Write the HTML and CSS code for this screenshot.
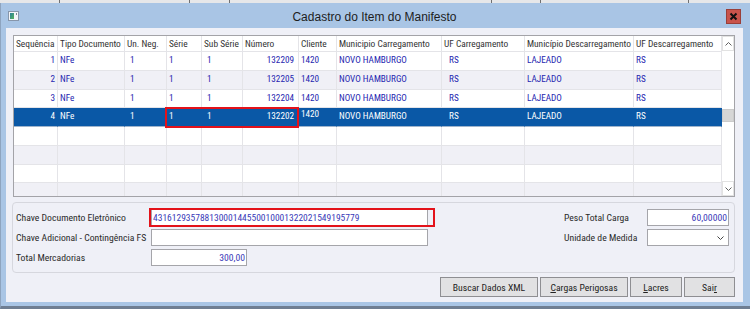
FILE: index.html
```html
<!DOCTYPE html>
<html lang="pt-BR">
<head>
      <meta charset="UTF-8">
      <meta name="viewport" content="width=device-width, initial-scale=1.0">
      <title>Cadastro do Item do Manifesto</title>
      <link rel="stylesheet" href="styles.css">
</head>
<body>

      <div class="backdrop">
            <span style="width:60px"></span>
            <span style="width:130px"></span>
            <span style="width:40px"></span>
            <span style="width:262px"></span>
            <span style="width:49px"></span>
            <span style="width:148px"></span>
      </div>

      <div class="window">
            <div class="titlebar">
                  <svg class="app-icon" width="11" height="10" viewBox="0 0 11 10">
                        <defs>
                              <linearGradient id="ic" x1="0" y1="0" x2="1" y2="1">
                                    <stop offset="0" stop-color="#2a7f9c"/>
                                    <stop offset="1" stop-color="#58b35a"/>
                              </linearGradient>
                        </defs>
                        <rect x="0.5" y="0.5" width="10" height="9" fill="#f3f5f8" stroke="#8796ab"/>
                        <rect x="2" y="2" width="4" height="6" fill="url(#ic)"/>
                        <rect x="8" y="2" width="1" height="2" fill="#7a8797"/>
                  </svg>
                  <div class="title">Cadastro do Item do Manifesto</div>
                  <div class="close">
                        <svg width="9" height="9" viewBox="0 0 9 9">
                              <path d="M1.5 1.5 L7.5 7.5 M7.5 1.5 L1.5 7.5" stroke="#111" stroke-width="2"/>
                        </svg>
                  </div>
            </div>

            <div class="client">
                  <div class="grid">
                        <table class="items">
                              <thead>
                                    <tr>
                                          <th class="w-seq">Sequência</th>
                                          <th class="w-tipo">Tipo Documento</th>
                                          <th class="w-un">Un. Neg.</th>
                                          <th class="w-serie">Série</th>
                                          <th class="w-sub">Sub Série</th>
                                          <th class="w-num">Número</th>
                                          <th class="w-cli">Cliente</th>
                                          <th class="w-mc">Municipio Carregamento</th>
                                          <th class="w-ufc">UF Carregamento</th>
                                          <th class="w-md">Município Descarregamento</th>
                                          <th class="w-ufd">UF Descarregamento</th>
                                    </tr>
                              </thead>
                              <tbody>
                                    <tr>
                                          <td class="num">1</td><td>NFe</td><td class="ind">1</td><td>1</td><td class="ind">1</td>
                                          <td class="num wide">132209</td><td>1420</td><td>NOVO HAMBURGO</td><td class="ind2">RS</td><td>LAJEADO</td><td>RS</td>
                                    </tr>
                                    <tr class="alt">
                                          <td class="num">2</td><td>NFe</td><td class="ind">1</td><td>1</td><td class="ind">1</td>
                                          <td class="num wide">132205</td><td>1420</td><td>NOVO HAMBURGO</td><td class="ind2">RS</td><td>LAJEADO</td><td>RS</td>
                                    </tr>
                                    <tr>
                                          <td class="num">3</td><td>NFe</td><td class="ind">1</td><td>1</td><td class="ind">1</td>
                                          <td class="num wide">132204</td><td>1420</td><td>NOVO HAMBURGO</td><td class="ind2">RS</td><td>LAJEADO</td><td>RS</td>
                                    </tr>
                                    <tr class="sel">
                                          <td class="num">4</td><td>NFe</td><td class="ind">1</td><td>1</td><td class="ind">1</td>
                                          <td class="num wide">132202</td><td class="raised">1420</td><td>NOVO HAMBURGO</td><td class="ind2">RS</td><td>LAJEADO</td><td>RS</td>
                                    </tr>
                                    <tr><td></td><td></td><td></td><td></td><td></td><td></td><td></td><td></td><td></td><td></td><td></td></tr>
                                    <tr class="alt"><td></td><td></td><td></td><td></td><td></td><td></td><td></td><td></td><td></td><td></td><td></td></tr>
                                    <tr><td></td><td></td><td></td><td></td><td></td><td></td><td></td><td></td><td></td><td></td><td></td></tr>
                                    <tr class="alt"><td></td><td></td><td></td><td></td><td></td><td></td><td></td><td></td><td></td><td></td><td></td></tr>
                              </tbody>
                        </table>
                        <div class="vscroll">
                              <div class="arrow">
                                    <svg width="7" height="4" viewBox="0 0 7 4"><path d="M0.5 3.5 L3.5 0.5 L6.5 3.5" fill="none" stroke="#606060"/></svg>
                              </div>
                              <div class="track"><div class="thumb"></div></div>
                              <div class="arrow">
                                    <svg width="7" height="4" viewBox="0 0 7 4"><path d="M0.5 0.5 L3.5 3.5 L6.5 0.5" fill="none" stroke="#606060"/></svg>
                              </div>
                        </div>
                        <div class="mark"></div>
                  </div>

                  <div class="group">
                        <div class="field-col">
                              <div class="field">
                                    <label>Chave Documento Eletrônico</label>
                                    <div class="input key">43161293578813000144550010001322021549195779</div>
                              </div>
                              <div class="field">
                                    <label>Chave Adicional - Contingência FS</label>
                                    <div class="input long"></div>
                              </div>
                              <div class="field">
                                    <label>Total Mercadorias</label>
                                    <div class="input short right">300,00</div>
                              </div>
                        </div>
                        <div class="field-col">
                              <div class="field">
                                    <label class="label-r">Peso Total Carga</label>
                                    <div class="input small right">60,00000</div>
                              </div>
                              <div class="field">
                                    <label class="label-r">Unidade de Medida</label>
                                    <div class="input small select">
                                          <svg width="7" height="4" viewBox="0 0 7 4"><path d="M0.5 0.5 L3.5 3.5 L6.5 0.5" fill="none" stroke="#444"/></svg>
                                    </div>
                              </div>
                        </div>
                  </div>

                  <div class="actions">
                        <button class="btn b-xml">Buscar Dados XML</button>
                        <button class="btn b-cargas"><u>C</u>argas Perigosas</button>
                        <button class="btn b-lacres"><u>L</u>acres</button>
                        <button class="btn b-sair">Sai<u>r</u></button>
                  </div>
            </div>
      </div>

</body>
</html>
```

FILE: styles.css
```css
:root {
	--frame: #a9c5e5;
	--client: #eff0f7;
	--line: #e4e4e8;
	--alt: #f0f0f6;
	--select: #0a58a6;
	--data: #2626b0;
	--value: #3a3ab8;
	--red: #e3121a;
}
html, body {
	margin: 0;
	padding: 0;
}
*, *:before, *:after {
	box-sizing: border-box;
}
body {
	width: 750px;
	height: 309px;
	overflow: hidden;
	background: #dde1e6;
	font-family: "Roboto Condensed", Roboto, "Liberation Sans", sans-serif;
	font-stretch: 75%;
	font-size: 9.7px;
	color: #2a2a2a;
}

/* strip of the window behind */
.backdrop {
	display: flex;
	height: 3px;
	background: #e6e7e9;
}
.backdrop span {
	height: 3px;
	border-right: 1px solid #707070;
}

.window {
	display: flex;
	flex-direction: column;
	height: 306px;
	padding: 0 7px 4px 5px;
	background: var(--frame);
	border-left: 1px solid #8ea4bf;
	border-bottom: 3px solid #6f7e92;
}

.titlebar {
	display: grid;
	grid-template-columns: 1fr auto 1fr;
	align-items: center;
	height: 25px;
}
.app-icon {
	margin-left: 2px;
	margin-top: 1px;
}
.title {
	font-family: "Liberation Sans", Arial, sans-serif;
	font-stretch: normal;
	font-size: 12px;
	color: #1d1d1d;
	padding-top: 2px;
}
.close {
	justify-self: end;
	display: flex;
	align-items: center;
	justify-content: center;
	width: 15px;
	height: 15px;
	margin-right: 2px;
	margin-top: 2px;
	background: #c9544c;
	border: 1px solid #9a3f39;
}

.client {
	display: flex;
	flex-direction: column;
	height: 274px;
	padding: 7px 8px 5px 7px;
	background: var(--client);
}

/* grid */
.grid {
	position: relative;
	display: flex;
	height: 162px;
	overflow: hidden;
	background: #fff;
	border: 1px solid #a3a3a8;
}
.items {
	width: 708px;
	table-layout: fixed;
	border-spacing: 0;
	flex: none;
	align-self: flex-start;
}
.items th,
.items td {
	padding: 0 2px;
	white-space: nowrap;
	overflow: hidden;
	border-right: 1px solid var(--line);
	border-bottom: 1px solid var(--line);
	line-height: 12px;
}
.items th {
	height: 16px;
	font-size: 9.4px;
	font-weight: normal;
	text-align: left;
	color: #333;
	padding-left: 2px;
	padding-right: 0;
}
.items td {
	height: 18.75px;
	vertical-align: top;
	padding-top: 2px;
	color: var(--data);
	font-size: 9.2px;
}
.items tr.alt td {
	background: var(--alt);
}
.items tr.sel td {
	background: var(--select);
	color: #fff;
	border-right-color: var(--select);
	border-bottom-color: #9fb4cc;
}
.items td.num {
	text-align: right;
}
.items td.wide {
	padding-right: 4px;
}
.items td.ind {
	padding-left: 5px;
}
.items td.ind2 {
	padding-left: 7px;
}
.items td.raised {
	padding-top: 0;
}
.w-seq { width: 44px; }
.w-tipo { width: 67px; }
.w-un { width: 42px; }
.w-serie { width: 35px; }
.w-sub { width: 41px; }
.w-num { width: 56px; }
.w-cli { width: 38px; }
.w-mc { width: 105px; }
.w-ufc { width: 83px; }
.w-md { width: 109px; }
.w-ufd { width: 88px; }

.vscroll {
	display: flex;
	flex-direction: column;
	width: 12px;
	background: #fff;
}
.vscroll .arrow {
	display: flex;
	align-items: center;
	justify-content: center;
	height: 15px;
	border: 1px solid #e2e2e2;
}
.vscroll .track {
	flex: 1;
	padding-top: 58px;
}
.vscroll .thumb {
	height: 13px;
	background: #d6d6d6;
	border: 1px solid #cbcbcb;
}
.mark {
	position: absolute;
	left: 151px;
	top: 71px;
	width: 134px;
	height: 21px;
	border: 2px solid var(--red);
}

/* fields */
.group {
	display: flex;
	justify-content: space-between;
	height: 71px;
	margin-top: 5px;
	margin-left: -1px;
	padding: 6px 5px 0 3px;
	border: 1px solid #d6d7de;
	border-radius: 4px;
}
.field-col {
	display: flex;
	flex-direction: column;
	gap: 3px;
}
.field {
	display: flex;
	align-items: center;
	height: 17px;
}
.field label {
	width: 135px;
	white-space: nowrap;
}
.field label.label-r {
	width: 83px;
}
.input {
	position: relative;
	height: 17px;
	padding: 0 2px;
	line-height: 15px;
	background: #fff;
	border: 1px solid #a5a5aa;
	color: var(--value);
	white-space: nowrap;
}
.input.key {
	width: 277px;
	font-size: 9.5px;
	padding-left: 1px;
}
.input.key:after {
	content: "";
	position: absolute;
	left: -3px;
	top: -2px;
	right: -8px;
	bottom: -2px;
	border: 2px solid var(--red);
}
.input.long {
	width: 277px;
}
.input.short {
	width: 96px;
}
.input.small {
	width: 82px;
}
.input.right {
	text-align: right;
	padding-right: 1px;
}
.input.select {
	display: flex;
	align-items: center;
	justify-content: flex-end;
	padding-right: 4px;
}

/* buttons */
.actions {
	display: flex;
	justify-content: flex-end;
	gap: 2px;
	margin-top: 4px;
}
.btn {
	height: 20px;
	padding: 0;
	font-family: inherit;
	font-stretch: inherit;
	font-size: 9.7px;
	color: #222;
	background: #e1e1e3;
	border: 1px solid #8e8e92;
	border-radius: 0;
}
.b-xml { width: 98px; }
.b-cargas { width: 88px; }
.b-lacres { width: 52px; }
.b-sair { width: 51px; }
```
